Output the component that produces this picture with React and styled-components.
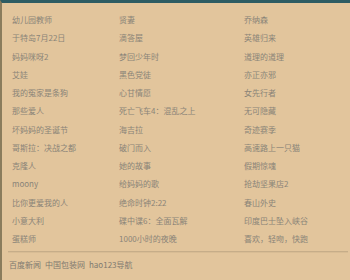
import styled, { createGlobalStyle } from "styled-components";

const GlobalStyle = createGlobalStyle`
  html, body {
    margin: 0;
    padding: 0;
    background: #e2c59c;
  }
`;

const Page = styled.div`
  width: 350px;
  height: 280px;
  box-sizing: border-box;
  background: #e2c59c;
  border-top: 3px solid #2d5c63;
  border-left: 2px solid #8a7c5c;
  font-family: "Noto Sans CJK SC", "Noto Sans", sans-serif;
  font-size: 8px;
  color: #8a8478;
  overflow: hidden;
`;

const List = styled.div`
  display: grid;
  grid-template-columns: 107px 125px 1fr;
  grid-auto-rows: 18.25px;
  align-items: center;
  padding: 8px 0 0 10px;
`;

const Item = styled.a`
  white-space: nowrap;
  line-height: 10px;
  color: inherit;
  text-decoration: none;
`;

const Divider = styled.div`
  margin: 3px 2px 0 6px;
  height: 1px;
  background: #c6ad89;
  border-bottom: 1px solid #d8bc94;
`;

const Footer = styled.div`
  display: flex;
  gap: 4px;
  padding: 7px 0 0 7px;
  line-height: 10px;
  color: #7f7a70;
`;

const rows = [
  ["幼儿园教师", "贤妻", "乔纳森"],
  ["于特岛7月22日", "滴答屋", "英雄归来"],
  ["妈妈咪呀2", "梦回少年时", "道理的道理"],
  ["艾娃", "黑色党徒", "亦正亦邪"],
  ["我的冤家是条狗", "心甘情愿", "女先行者"],
  ["那些爱人", "死亡飞车4：混乱之上", "无可隐藏"],
  ["坏妈妈的圣诞节", "海吉拉", "奇迹赛季"],
  ["哥斯拉：决战之都", "破门而入", "高速路上一只猫"],
  ["克隆人", "她的故事", "假期惊魂"],
  ["moony", "给妈妈的歌", "抢劫坚果店2"],
  ["比你更爱我的人", "绝命时钟2:22", "春山外史"],
  ["小意大利", "碟中谍6：全面瓦解", "印度巴士坠入峡谷"],
  ["蛋糕师", "1000小时的夜晚", "喜欢，轻吻，快跑"],
];

const links = ["百度新闻", "中国包装网", "hao123导航"];

export default function App() {
  return (
    <>
      <GlobalStyle />
      <Page>
        <List>
          {rows.flat().map((t, i) => (
            <Item key={i}>{t}</Item>
          ))}
        </List>
        <Divider />
        <Footer>
          {links.map((l) => (
            <Item key={l}>{l}</Item>
          ))}
        </Footer>
      </Page>
    </>
  );
}
